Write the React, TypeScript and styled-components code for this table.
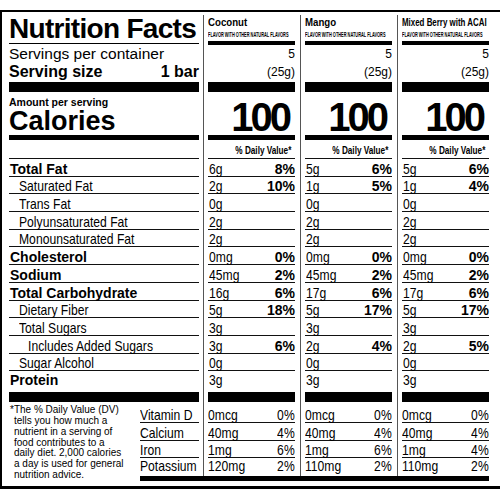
import React from "react";
import styled, { createGlobalStyle } from "styled-components";

const SANS = `"Liberation Sans", Arial, sans-serif`;
const ROW_H = 17.7;

interface INutrient {
    label: string,
    bold?: boolean,
    indent?: number,
}

interface IFlavor {
    name: string,
    nameSize: number,
    nameScale: number,
    rows: [string, string?][],
    vitamins: [string, string][],
}

const nutrients: INutrient[] = [
    { label: "Total Fat", bold: true },
    { label: "Saturated Fat", indent: 1 },
    { label: "Trans Fat", indent: 1 },
    { label: "Polyunsaturated Fat", indent: 1 },
    { label: "Monounsaturated Fat", indent: 1 },
    { label: "Cholesterol", bold: true },
    { label: "Sodium", bold: true },
    { label: "Total Carbohydrate", bold: true },
    { label: "Dietary Fiber", indent: 1 },
    { label: "Total Sugars", indent: 1 },
    { label: "Includes Added Sugars", indent: 2 },
    { label: "Sugar Alcohol", indent: 1 },
    { label: "Protein", bold: true },
];

const vitaminNames = ["Vitamin D", "Calcium", "Iron", "Potassium"];

const flavors: IFlavor[] = [
    {
        name: "Coconut", nameSize: 11.5, nameScale: 0.84,
        rows: [["6g", "8%"], ["2g", "10%"], ["0g"], ["2g"], ["2g"], ["0mg", "0%"], ["45mg", "2%"],
            ["16g", "6%"], ["5g", "18%"], ["3g"], ["3g", "6%"], ["0g"], ["3g"]],
        vitamins: [["0mcg", "0%"], ["40mg", "4%"], ["1mg", "6%"], ["120mg", "2%"]],
    },
    {
        name: "Mango", nameSize: 11.5, nameScale: 0.84,
        rows: [["5g", "6%"], ["1g", "5%"], ["0g"], ["2g"], ["2g"], ["0mg", "0%"], ["45mg", "2%"],
            ["17g", "6%"], ["5g", "17%"], ["3g"], ["2g", "4%"], ["0g"], ["3g"]],
        vitamins: [["0mcg", "0%"], ["40mg", "4%"], ["1mg", "6%"], ["110mg", "2%"]],
    },
    {
        name: "Mixed Berry with ACAI", nameSize: 11, nameScale: 0.72,
        rows: [["5g", "6%"], ["1g", "4%"], ["0g"], ["2g"], ["2g"], ["0mg", "0%"], ["45mg", "2%"],
            ["17g", "6%"], ["5g", "17%"], ["3g"], ["2g", "5%"], ["0g"], ["3g"]],
        vitamins: [["0mcg", "0%"], ["40mg", "4%"], ["1mg", "4%"], ["110mg", "2%"]],
    },
];

const App = () => {
    return <>
        <GlobalStyle />
        <Label>
            <Panels>
                <LeftPanel>
                    <Title>Nutrition Facts</Title>
                    <Servings>Servings per container</Servings>
                    <ServingSize><span>Serving size</span><span>1 bar</span></ServingSize>
                    <Bar $h={10} $mt={2} />
                    <CalLeft>
                        <AmountPer>Amount per serving</AmountPer>
                        <Calories>Calories</Calories>
                    </CalLeft>
                    <Bar $h={5} />
                    <DvRow />
                    {nutrients.map((n, i) => (
                        <NutrientLabel key={n.label} $bold={!!n.bold} $indent={n.indent || 0} $last={i === nutrients.length - 1}>
                            {n.bold ? n.label : <Narrow>{n.label}</Narrow>}
                        </NutrientLabel>
                    ))}
                    <Bar $h={10} />
                </LeftPanel>
                {flavors.map((f, fi) => (
                    <React.Fragment key={f.name}>
                        <Divider $left={fi === 0 ? 4 : 5} />
                        <Column>
                            <ColHead>
                                <FlavorName $size={f.nameSize} $scale={f.nameScale}>{f.name}</FlavorName>
                                <FlavorNote>FLAVOR WITH OTHER NATURAL FLAVORS</FlavorNote>
                            </ColHead>
                            <Bar $h={4} />
                            <ServNum $h={18}>5</ServNum>
                            <ServNum $h={17} $pt={1}>(25g)</ServNum>
                            <Bar $h={10} $mt={2} />
                            <CalNum>100</CalNum>
                            <Bar $h={5} />
                            <DvRow><DvText>% Daily Value*</DvText></DvRow>
                            {f.rows.map((r, i) => (
                                <ValueRow key={i} $last={i === f.rows.length - 1}>
                                    <Narrow>{r[0]}</Narrow>
                                    {r[1] && <Pct>{r[1]}</Pct>}
                                </ValueRow>
                            ))}
                            <Bar $h={10} />
                        </Column>
                    </React.Fragment>
                ))}
            </Panels>
            <VitSection>
                <Footnote>
                    *The % Daily Value (DV)<br />
                    tells you how much a<br />
                    nutrient in a serving of<br />
                    food contributes to a<br />
                    daily diet. 2,000 calories<br />
                    a day is used for general<br />
                    nutrition advice.
                </Footnote>
                <VitRight>
                    <VitGrid>
                        <VitLabels>
                            {vitaminNames.map((v, i) => (
                                <VitRow key={v} $last={i === vitaminNames.length - 1}><Narrow>{v}</Narrow></VitRow>
                            ))}
                        </VitLabels>
                        {flavors.map((f, fi) => (
                            <React.Fragment key={f.name}>
                                <Divider $left={fi === 0 ? 4 : 5} />
                                <VitCol>
                                    {f.vitamins.map((v, i) => (
                                        <VitRow key={i} $last={i === f.vitamins.length - 1}>
                                            <Narrow>{v[0]}</Narrow>
                                            <Narrow $right>{v[1]}</Narrow>
                                        </VitRow>
                                    ))}
                                </VitCol>
                            </React.Fragment>
                        ))}
                    </VitGrid>
                    <Bar $h={5} />
                </VitRight>
            </VitSection>
        </Label>
    </>
}

const GlobalStyle = createGlobalStyle`
    html, body {
        margin: 0;
        padding: 0;
        background: #fff;
        overflow: hidden;
    }
    body {
        font-family: ${SANS};
        color: #000;
    }
`

const Label = styled.div`
    box-sizing: border-box;
    width: 500px;
    margin-top: 10px;
    border-top: 2px solid #000;
    border-left: 2px solid #000;
    border-bottom: 3px solid #000;
    padding: 3px 0 5px 7px;
`

const Panels = styled.div`
    display: flex;
`

const LeftPanel = styled.div`
    width: 190px;
    flex: none;
    display: flex;
    flex-direction: column;
`

const Column = styled.div`
    width: 87px;
    flex: none;
    display: flex;
    flex-direction: column;
`

const Divider = styled.div<{ $left: number }>`
    width: 1px;
    flex: none;
    background: #555;
    margin: 0 4px 0 ${props => props.$left}px;
`

const Bar = styled.div<{ $h: number, $mt?: number }>`
    height: ${props => props.$h}px;
    margin-top: ${props => props.$mt || 0}px;
    background: #000;
    flex: none;
`

// condensed type: no narrow face is installed, so squeeze the regular one
const Narrow = styled.span<{ $right?: boolean }>`
    display: inline-block;
    font: 15px/14px ${SANS};
    white-space: nowrap;
    transform: scaleX(0.81);
    transform-origin: ${props => props.$right ? "right" : "left"} bottom;
`

const Title = styled.div`
    font: bold 28px/28px ${SANS};
    letter-spacing: -0.7px;
    white-space: nowrap;
    border-bottom: 1px solid #000;
    margin-bottom: 1px;
`

const Servings = styled.div`
    font-size: 15.5px;
    line-height: 18px;
    height: 18px;
    white-space: nowrap;
`

const ServingSize = styled.div`
    display: flex;
    justify-content: space-between;
    font: bold 16px/17px ${SANS};
    height: 17px;
    white-space: nowrap;
`

const ColHead = styled.div`
    height: 26px;
    box-sizing: border-box;
    padding-top: 1px;
`

const FlavorName = styled.div<{ $size: number, $scale: number }>`
    font: bold ${props => props.$size}px/12px ${SANS};
    transform: scaleX(${props => props.$scale});
    transform-origin: left;
    white-space: nowrap;
`

const FlavorNote = styled.div`
    font: bold 6.5px/6px ${SANS};
    margin-top: 4px;
    transform: scaleX(0.6);
    transform-origin: left;
    white-space: nowrap;
`

const ServNum = styled.div<{ $h: number, $pt?: number }>`
    height: ${props => props.$h}px;
    box-sizing: border-box;
    padding-top: ${props => props.$pt || 0}px;
    line-height: ${props => props.$h - (props.$pt || 0)}px;
    font-size: 12px;
    text-align: right;
`

const CalLeft = styled.div`
    height: 43px;
    box-sizing: border-box;
    padding-top: 5px;
`

const AmountPer = styled.div`
    font: bold 10.5px/11px ${SANS};
    white-space: nowrap;
`

const Calories = styled.div`
    font: bold 27px/24px ${SANS};
    margin-top: 1px;
    white-space: nowrap;
`

const CalNum = styled.div`
    height: 43px;
    box-sizing: border-box;
    display: flex;
    align-items: flex-end;
    justify-content: flex-end;
    padding: 0 6px 1px 0;
    font: bold 40px/34px ${SANS};
    letter-spacing: -3px;
`

const DvRow = styled.div`
    height: 19px;
    box-sizing: border-box;
    border-bottom: 1px solid #111;
    display: flex;
    align-items: flex-end;
    justify-content: flex-end;
    padding: 0 4px 2px 0;
`

const DvText = styled.span`
    display: inline-block;
    font: bold 10px/10px ${SANS};
    white-space: nowrap;
    transform: scaleX(0.82);
    transform-origin: right bottom;
`

const NutrientLabel = styled.div<{ $bold: boolean, $indent: number, $last: boolean }>`
    height: ${props => props.$last ? 21 : ROW_H}px;
    box-sizing: border-box;
    border-bottom: ${props => props.$last ? "none" : "1px solid #111"};
    display: flex;
    align-items: ${props => props.$last ? "flex-start" : "flex-end"};
    padding: ${props => props.$last ? 2 : 0}px 0 0 ${props => props.$indent * 9 + 1}px;
    font: bold 14px/14px ${SANS};
    white-space: nowrap;
`

const ValueRow = styled.div<{ $last: boolean }>`
    height: ${props => props.$last ? 21 : ROW_H}px;
    box-sizing: border-box;
    border-bottom: ${props => props.$last ? "none" : "1px solid #111"};
    display: flex;
    justify-content: space-between;
    align-items: ${props => props.$last ? "flex-start" : "flex-end"};
    padding: ${props => props.$last ? 2 : 0}px 0 0 1px;
    white-space: nowrap;
`

const Pct = styled.span`
    font: bold 14px/14px ${SANS};
`

const VitSection = styled.div`
    display: flex;
`

const Footnote = styled.div`
    width: 131px;
    flex: none;
    box-sizing: border-box;
    padding: 3px 0 0 5px;
    text-indent: -4px;
    font: 10px/10.8px ${SANS};
    white-space: nowrap;
`

const VitRight = styled.div`
    width: 349px;
    flex: none;
    display: flex;
    flex-direction: column;
`

const VitGrid = styled.div`
    display: flex;
`

const VitLabels = styled.div`
    width: 59px;
    flex: none;
    padding-top: 3px;
`

const VitCol = styled.div`
    width: 87px;
    flex: none;
    padding-top: 3px;
`

const VitRow = styled.div<{ $last: boolean }>`
    height: ${ROW_H}px;
    box-sizing: border-box;
    border-bottom: ${props => props.$last ? "none" : "1px solid #111"};
    padding-bottom: ${props => props.$last ? 3 : 0}px;
    display: flex;
    justify-content: space-between;
    align-items: flex-end;
    white-space: nowrap;
`

export default App;
